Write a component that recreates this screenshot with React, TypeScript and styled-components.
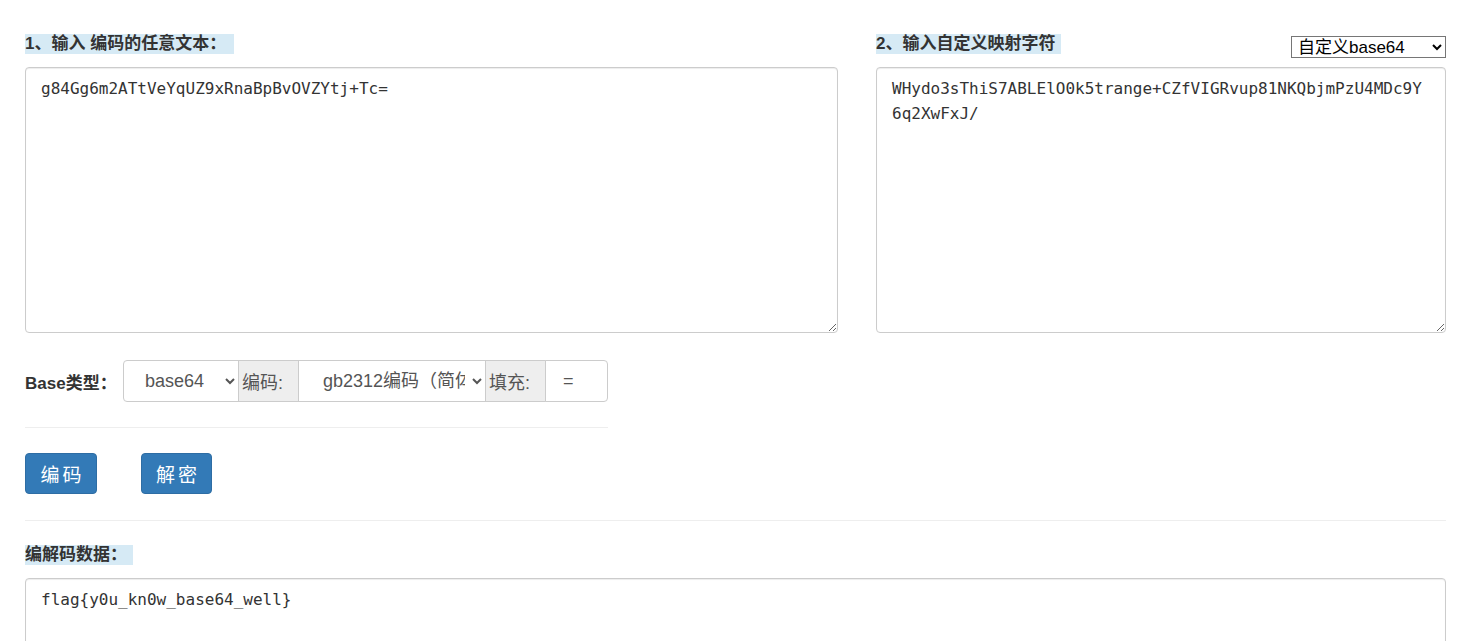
import React from "react";
import styled, { createGlobalStyle } from "styled-components";

const GlobalStyle = createGlobalStyle`
  html, body {
    margin: 0;
    padding: 0;
    background: #fff;
  }
  body {
    font-family: "Liberation Sans", "Noto Sans CJK SC", sans-serif;
    color: #333;
    font-size: 14px;
  }
`;

const Page = styled.div`
  padding: 34px 35px 0 25px;
  box-sizing: border-box;
  width: 1481px;
  height: 641px;
  overflow: hidden;
`;

const TopGrid = styled.div`
  display: grid;
  grid-template-columns: 813px 570px;
  column-gap: 38px;
`;

const Column = styled.div`
  display: flex;
  flex-direction: column;
`;

const HeaderRow = styled.div`
  display: flex;
  justify-content: space-between;
  align-items: flex-start;
  height: 24px;
  margin-bottom: 9px;
`;

const Label = styled.span<{ $trail?: number }>`
  display: inline-block;
  height: 20px;
  line-height: 20px;
  font-size: 17px;
  font-weight: 700;
  color: #333;
  background: #d6eaf5;
  padding-right: ${(p) => p.$trail ?? 0}px;
  font-family: "Liberation Sans", "Noto Sans CJK SC", sans-serif;
  white-space: pre;
`;

const MapSelect = styled.select`
  margin-top: 2px;
  width: 155px;
  height: 22px;
  font-size: 17px;
  font-family: "Liberation Sans", "Noto Sans CJK SC", sans-serif;
  color: #000;
  background: #fff;
  border: 1px solid #767676;
  border-radius: 0;
  padding: 0 0 0 2px;
  box-sizing: border-box;
`;

const TextArea = styled.textarea<{ $h: number }>`
  display: block;
  box-sizing: border-box;
  width: 100%;
  height: ${(p) => p.$h}px;
  border: 1px solid #ccc;
  border-radius: 4px;
  padding: 8px 15px;
  font-family: "DejaVu Sans Mono", monospace;
  font-size: 16px;
  line-height: 25px;
  color: #333;
  background: #fff;
  margin: 0;
  box-shadow: inset 0 1px 1px rgba(0, 0, 0, 0.075);
  word-break: break-all;
`;

const FormRow = styled.div`
  display: flex;
  align-items: center;
  margin-top: 27px;
  height: 42px;
  width: 583px;
`;

const FormLabel = styled.span`
  font-size: 17px;
  font-weight: 700;
  color: #333;
  width: 99px;
`;

const Group = styled.div`
  display: flex;
  height: 42px;
`;

const GroupSelect = styled.select<{ $w: number; $pl: number; $first?: boolean }>`
  width: ${(p) => p.$w}px;
  height: 42px;
  box-sizing: border-box;
  border: 1px solid #ccc;
  border-radius: ${(p) => (p.$first ? "4px 0 0 4px" : "0")};
  background: #fff;
  color: #555;
  font-size: 18px;
  font-family: "Liberation Sans", "Noto Sans CJK SC", sans-serif;
  padding: 0 4px 0 ${(p) => p.$pl}px;
  margin: 0 0 0 ${(p) => (p.$first ? 0 : -1)}px;
  outline: none;
`;

const Addon = styled.span`
  display: flex;
  align-items: center;
  box-sizing: border-box;
  width: 61px;
  height: 42px;
  margin-left: -1px;
  padding-left: 3px;
  background: #eee;
  border: 1px solid #ccc;
  color: #555;
  font-size: 18px;
`;

const PadInput = styled.input`
  box-sizing: border-box;
  width: 63px;
  height: 42px;
  margin: 0 0 0 -1px;
  border: 1px solid #ccc;
  border-radius: 0 4px 4px 0;
  padding: 0 0 0 17px;
  font-size: 18px;
  color: #555;
  font-family: "Liberation Sans", "Noto Sans CJK SC", sans-serif;
  outline: none;
`;

const Rule = styled.hr<{ $w?: number; $top?: number }>`
  border: 0;
  border-top: 1px solid #eee;
  margin: ${(p) => p.$top ?? 25}px 0 0 0;
  width: ${(p) => (p.$w ? `${p.$w}px` : "100%")};
  height: 0;
`;

const ButtonRow = styled.div`
  display: flex;
  gap: 44px;
  margin-top: 25px;
  margin-bottom: 26px;
`;

const Button = styled.button<{ $w: number }>`
  width: ${(p) => p.$w}px;
  height: 41px;
  box-sizing: border-box;
  background: #337ab7;
  border: 1px solid #2e6da4;
  border-radius: 4px;
  color: #fff;
  font-size: 19px;
  font-family: "Noto Sans CJK SC", sans-serif;
  letter-spacing: 3px;
  padding: 0 0 0 3px;
  cursor: pointer;
`;

const ResultLabelRow = styled.div`
  margin-top: 24px;
  margin-bottom: 13px;
  height: 20px;
`;

export default function App() {
  return (
    <>
      <GlobalStyle />
      <Page>
        <TopGrid>
          <Column>
            <HeaderRow>
              <Label $trail={8}>1、输入 编码的任意文本：</Label>
            </HeaderRow>
            <TextArea $h={266} defaultValue="g84Gg6m2ATtVeYqUZ9xRnaBpBvOVZYtj+Tc=" />
          </Column>
          <Column>
            <HeaderRow>
              <Label $trail={6}>2、输入自定义映射字符</Label>
              <MapSelect defaultValue="custom">
                <option value="custom">自定义base64</option>
                <option value="std">标准base64</option>
              </MapSelect>
            </HeaderRow>
            <TextArea
              $h={266}
              defaultValue="WHydo3sThiS7ABLElO0k5trange+CZfVIGRvup81NKQbjmPzU4MDc9Y6q2XwFxJ/"
            />
          </Column>
        </TopGrid>

        <FormRow>
          <FormLabel>Base类型：</FormLabel>
          <Group>
            <GroupSelect $w={116} $pl={17} $first defaultValue="base64">
              <option value="base64">base64</option>
              <option value="base32">base32</option>
              <option value="base16">base16</option>
            </GroupSelect>
            <Addon>编码:</Addon>
            <GroupSelect $w={188} $pl={20} defaultValue="gb2312">
              <option value="gb2312">gb2312编码（简体中文）</option>
              <option value="utf8">utf-8编码</option>
            </GroupSelect>
            <Addon>填充:</Addon>
            <PadInput defaultValue="=" />
          </Group>
        </FormRow>

        <Rule $w={583} />

        <ButtonRow>
          <Button $w={72}>编码</Button>
          <Button $w={71}>解密</Button>
        </ButtonRow>

        <Rule $top={0} />

        <ResultLabelRow>
          <Label $trail={6}>编解码数据：</Label>
        </ResultLabelRow>
        <TextArea $h={200} defaultValue="flag{y0u_kn0w_base64_well}" />
      </Page>
    </>
  );
}
